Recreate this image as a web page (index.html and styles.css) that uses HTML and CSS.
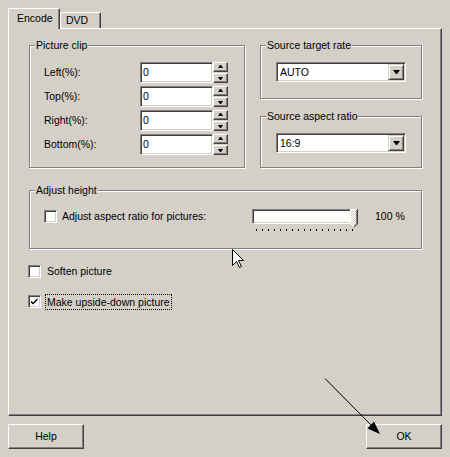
FILE: index.html
```html
<!DOCTYPE html>
<html>
<head>
<meta charset="utf-8">
<title>Encode</title>
<link rel="stylesheet" href="styles.css">
</head>
<body>
<div class="dialog">
  <div class="tabs">
    <div class="tab active">Encode</div>
    <div class="tab dvd">DVD</div>
  </div>
  <div class="panel">
    <div class="top-grid">
      <div class="group clip">
        <span class="group-title">Picture clip</span>
        <div class="clip-body">
          <span class="lbl">Left(%):</span>
          <div class="edit">0</div>
          <div class="spin"><span class="sb up"></span><span class="sb down"></span></div>
          <span class="lbl">Top(%):</span>
          <div class="edit">0</div>
          <div class="spin"><span class="sb up"></span><span class="sb down"></span></div>
          <span class="lbl">Right(%):</span>
          <div class="edit">0</div>
          <div class="spin"><span class="sb up"></span><span class="sb down"></span></div>
          <span class="lbl">Bottom(%):</span>
          <div class="edit">0</div>
          <div class="spin"><span class="sb up"></span><span class="sb down"></span></div>
        </div>
      </div>
      <div class="right-col">
        <div class="group rate">
          <span class="group-title">Source target rate</span>
          <div class="combo"><span class="combo-text">AUTO</span><span class="combo-btn"><span class="tri-down"></span></span></div>
        </div>
        <div class="group aspect">
          <span class="group-title">Source aspect ratio</span>
          <div class="combo"><span class="combo-text">16:9</span><span class="combo-btn"><span class="tri-down"></span></span></div>
        </div>
      </div>
    </div>
    <div class="group adjust">
      <span class="group-title">Adjust height</span>
      <div class="adjust-row">
        <div class="check-line">
          <span class="check"></span>
          <span class="check-label">Adjust aspect ratio for pictures:</span>
        </div>
        <div class="slider">
          <div class="track"></div>
          <svg class="thumb" width="8" height="19" viewBox="0 0 8 19">
            <defs>
              <pattern id="dither" width="2" height="2" patternUnits="userSpaceOnUse">
                <rect width="2" height="2" fill="#d4d0c8"/>
                <rect width="1" height="1" fill="#ffffff"/>
                <rect x="1" y="1" width="1" height="1" fill="#ffffff"/>
              </pattern>
            </defs>
            <polygon points="0,0 8,0 8,15 4,19 0,15" fill="url(#dither)"/>
            <polyline points="0.5,15 0.5,0.5 7,0.5" fill="none" stroke="#ffffff"/>
            <polyline points="7.5,0 7.5,15 4,18.5" fill="none" stroke="#404040"/>
            <polyline points="6.5,1 6.5,14.5 4,17" fill="none" stroke="#808080"/>
          </svg>
          <div class="ticks"></div>
        </div>
        <span class="pct">100 %</span>
      </div>
    </div>
    <div class="check-row soften">
      <span class="check"></span>
      <span class="check-label">Soften picture</span>
    </div>
    <div class="check-row upside">
      <span class="check checked">
        <svg width="9" height="9" viewBox="0 0 9 9"><path d="M1 3.5 L3 5.5 L7.5 1 L7.5 3 L3 7.5 L1 5.5 Z" fill="#000"/></svg>
      </span>
      <span class="check-label focus">Make upside-down picture</span>
    </div>
  </div>
  <div class="buttons">
    <button class="btn">Help</button>
    <button class="btn">OK</button>
  </div>
</div>
<svg class="annot" width="450" height="457" viewBox="0 0 450 457">
  <line x1="325" y1="378.5" x2="372" y2="426" stroke="#000" stroke-width="1"/>
  <polygon points="380,434 367.5,428.5 374,421.5" fill="#000"/>
</svg>
<svg class="cursor" width="13" height="20" viewBox="0 0 13 20">
  <polygon points="0.5,0.5 0.5,16.5 4.5,12.5 7.5,18.5 9.5,17.5 6.5,11.5 11.5,11.5" fill="#fff" stroke="#000" stroke-width="1" stroke-linejoin="miter"/>
</svg>
</body>
</html>
```

FILE: styles.css
```css
html, body {
  margin: 0;
  padding: 0;
}

body {
  width: 450px;
  height: 457px;
  overflow: hidden;
  position: relative;
  background: #d4d0c8;
  color: #000;
  font-family: "Liberation Sans", Arial, sans-serif;
  font-size: 10.5px;
  line-height: 13px;
}

.dialog {
  padding: 8px 8px 0 8px;
}

/* Tabs */
.tabs {
  display: flex;
  align-items: flex-end;
  height: 20px;
  position: relative;
  z-index: 1;
}

.tab {
  box-sizing: border-box;
  background: #d4d0c8;
  border-top: 1px solid #fff;
  border-left: 1px solid #fff;
  border-right: 1px solid #404040;
  box-shadow: inset -1px 0 0 #808080;
  border-radius: 2px 2px 0 0;
}

.tab.active {
  width: 52px;
  height: 21px;
  margin-bottom: -1px;
  padding: 3px 0 0 8px;
}

.tab.dvd {
  width: 41px;
  height: 16px;
  padding: 1px 0 0 5px;
}

/* Panel */
.panel {
  box-sizing: border-box;
  height: 388px;
  border: 1px solid;
  border-color: #fff #404040 #404040 #fff;
  box-shadow: inset -1px -1px 0 #808080;
  padding: 16px 19px 0 20px;
}

.top-grid {
  display: grid;
  grid-template-columns: 216px 162px;
  column-gap: 15px;
  align-items: start;
}

.right-col {
  display: flex;
  flex-direction: column;
}

/* Group boxes */
.group {
  position: relative;
  border: 1px solid #808080;
  box-shadow: inset 1px 1px 0 #fff, 1px 1px 0 #fff;
}

.group-title {
  position: absolute;
  top: -7px;
  left: 5px;
  padding: 0 1px;
  background: #d4d0c8;
  line-height: 13px;
  white-space: nowrap;
}

.clip {
  padding: 16px 0 12px 14px;
}

.clip-body {
  display: grid;
  grid-template-columns: 96px 73px 15px;
  grid-auto-rows: 21px;
  row-gap: 3px;
  align-items: center;
}

.edit {
  box-sizing: border-box;
  width: 73px;
  height: 21px;
  border: 1px solid;
  border-color: #808080 #fff #fff #808080;
  box-shadow: inset 1px 1px 0 #404040, inset -1px -1px 0 #d4d0c8;
  background: #fff;
  padding-left: 2px;
  line-height: 19px;
}

.spin {
  display: flex;
  flex-direction: column;
  gap: 1px;
  height: 21px;
}

.sb {
  box-sizing: border-box;
  width: 15px;
  height: 10px;
  background: #d4d0c8;
  border: 1px solid;
  border-color: #fff #404040 #404040 #fff;
  box-shadow: inset -1px -1px 0 #808080;
  display: flex;
  align-items: center;
  justify-content: center;
}

.sb::after {
  content: "";
  width: 1px;
  height: 0;
  border-left: 2px solid transparent;
  border-right: 2px solid transparent;
}

.sb.up::after {
  border-bottom: 3px solid #000;
  margin-bottom: 1px;
}

.sb.down::after {
  border-top: 3px solid #000;
  margin-bottom: 0;
}

.rate {
  padding: 16px 0 16px 15px;
}

.aspect {
  margin-top: 17px;
  padding: 16px 0 14px 15px;
}

.combo {
  box-sizing: border-box;
  width: 130px;
  height: 20px;
  border: 1px solid;
  border-color: #808080 #fff #fff #808080;
  box-shadow: inset 1px 1px 0 #404040, inset -1px -1px 0 #d4d0c8;
  background: #fff;
  padding: 1px;
  display: flex;
}

.combo-text {
  flex: 1;
  padding-left: 2px;
  line-height: 16px;
}

.combo-btn {
  box-sizing: border-box;
  width: 16px;
  height: 16px;
  background: #d4d0c8;
  border: 1px solid;
  border-color: #d4d0c8 #404040 #404040 #d4d0c8;
  box-shadow: inset 1px 1px 0 #fff, inset -1px -1px 0 #808080;
  display: flex;
  align-items: center;
  justify-content: center;
}

.tri-down {
  width: 1px;
  height: 0;
  border-left: 3px solid transparent;
  border-right: 3px solid transparent;
  border-top: 4px solid #000;
}

/* Adjust height */
.adjust {
  margin-top: 22px;
  padding: 18px 0 17px 14px;
}

.adjust-row {
  display: grid;
  grid-template-columns: 208px 106px auto;
  align-items: start;
}

.check-line {
  display: flex;
  align-items: center;
  gap: 5px;
  height: 15px;
}

.check {
  box-sizing: border-box;
  flex: none;
  width: 13px;
  height: 13px;
  border: 1px solid;
  border-color: #808080 #fff #fff #808080;
  box-shadow: inset 1px 1px 0 #404040, inset -1px -1px 0 #d4d0c8;
  background: #fff;
  display: flex;
  align-items: center;
  justify-content: center;
}

.check svg {
  display: block;
}

.slider {
  position: relative;
  height: 22px;
}

.track {
  box-sizing: border-box;
  width: 100px;
  height: 15px;
  border: 1px solid;
  border-color: #808080 #fff #fff #808080;
  box-shadow: inset 1px 1px 0 #404040, inset -1px -1px 0 #d4d0c8;
  background: #fcfcfa;
}

.thumb {
  position: absolute;
  left: 98px;
  top: 0;
}

.ticks {
  margin: 5px 0 0 4px;
  width: 99px;
  height: 2px;
  background: repeating-linear-gradient(to right, #000 0 1px, transparent 1px 6px);
}

.pct {
  margin-left: 17px;
  line-height: 15px;
  white-space: nowrap;
}

/* Loose checkboxes */
.check-row {
  display: flex;
  align-items: center;
  margin-left: -1px;
  height: 13px;
}

.soften {
  margin-top: 16px;
  gap: 6px;
}

.upside {
  margin-top: 17px;
  gap: 5px;
}

.focus {
  outline: 1px dotted #000;
  padding: 0 1px;
  line-height: 14px;
}

/* Buttons */
.buttons {
  display: flex;
  justify-content: space-between;
  margin-top: 8px;
}

.btn {
  box-sizing: border-box;
  width: 76px;
  height: 25px;
  margin: 0;
  padding: 0;
  background: #d4d0c8;
  border: 1px solid;
  border-color: #fff #404040 #404040 #fff;
  box-shadow: inset -1px -1px 0 #808080;
  font: inherit;
  color: #000;
}

/* Overlays: annotation arrow and mouse pointer */
.annot {
  position: absolute;
  left: 0;
  top: 0;
  pointer-events: none;
}

.cursor {
  position: absolute;
  left: 232px;
  top: 249px;
  pointer-events: none;
}
```
